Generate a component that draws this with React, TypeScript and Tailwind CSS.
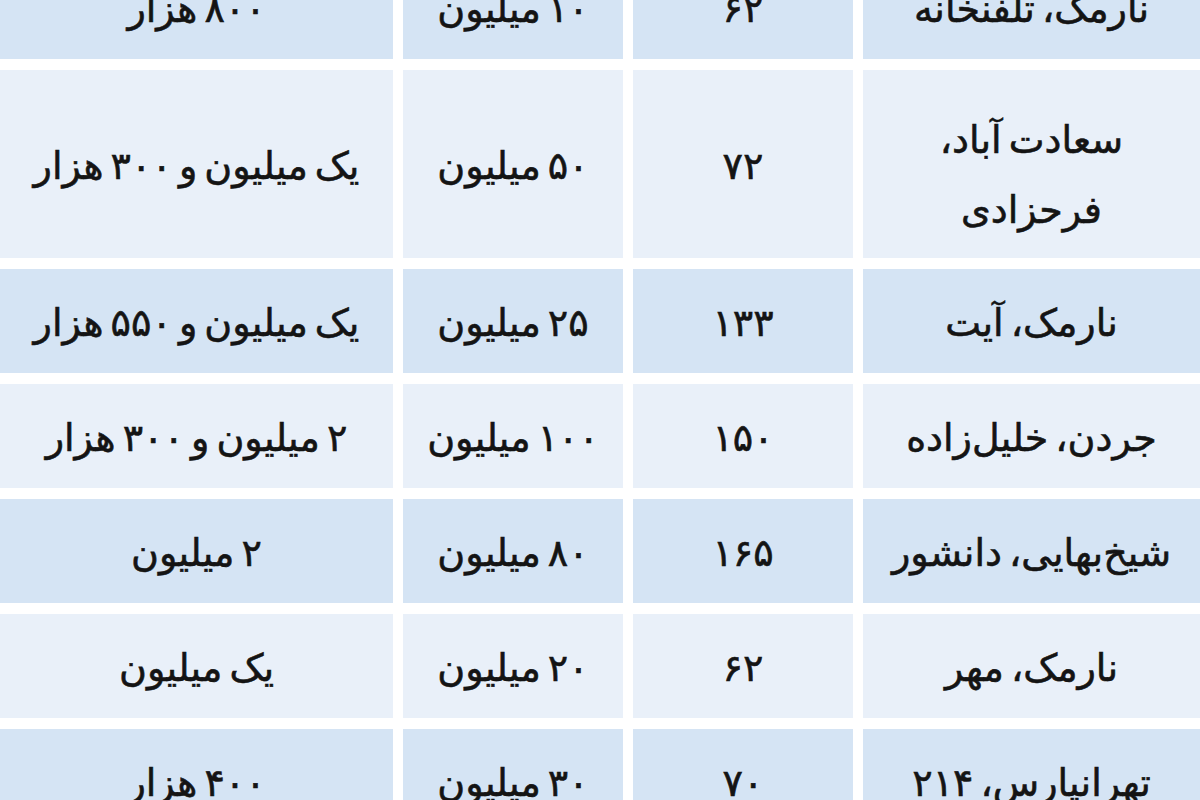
const rows: { price: string; deposit: string; area: string; place: string[] }[] = [
  { price: "۸۰۰ هزار", deposit: "۱۰ میلیون", area: "۶۲", place: ["نارمک، تلفنخانه"] },
  { price: "یک میلیون و ۳۰۰ هزار", deposit: "۵۰ میلیون", area: "۷۲", place: ["سعادت آباد،", "فرحزادی"] },
  { price: "یک میلیون و ۵۵۰ هزار", deposit: "۲۵ میلیون", area: "۱۳۳", place: ["نارمک، آیت"] },
  { price: "۲ میلیون و ۳۰۰ هزار", deposit: "۱۰۰ میلیون", area: "۱۵۰", place: ["جردن، خلیل‌زاده"] },
  { price: "۲ میلیون", deposit: "۸۰ میلیون", area: "۱۶۵", place: ["شیخ‌بهایی، دانشور"] },
  { price: "یک میلیون", deposit: "۲۰ میلیون", area: "۶۲", place: ["نارمک، مهر"] },
  { price: "۴۰۰ هزار", deposit: "۳۰ میلیون", area: "۷۰", place: ["تهرانپارس، ۲۱۴"] },
];

function Cell({ dark, tall, children }: { dark: boolean; tall: boolean; children: React.ReactNode }) {
  return (
    <div
      className={
        "flex flex-col items-center justify-center text-center whitespace-nowrap " +
        (tall ? "h-[188px] " : "h-[104px] ") +
        (dark ? "bg-[#d5e4f4]" : "bg-[#e9f0f9]")
      }
    >
      {children}
    </div>
  );
}

export default function App() {
  return (
    <div className="w-[1200px] h-[800px] overflow-hidden bg-white">
      <div
        dir="rtl"
        className="-mt-[45px] grid grid-cols-[337px_220px_220px_393px] gap-x-[10px] gap-y-[11px] text-[38px] text-[#141414] [word-spacing:-5px] [-webkit-text-stroke:0.6px_#141414] font-['DejaVu_Sans',sans-serif]"
      >
        {rows.map((r, i) => {
          const dark = i % 2 === 0;
          const tall = r.place.length > 1;
          return [
            <Cell key={i + "p"} dark={dark} tall={tall}>
              <div className={tall ? "pt-[22px] leading-[70px]" : "pt-[4px]"}>
                {r.place.map((l) => (
                  <div key={l}>{l}</div>
                ))}
              </div>
            </Cell>,
            <Cell key={i + "a"} dark={dark} tall={tall}>
              <div className="pt-[4px]">{r.area}</div>
            </Cell>,
            <Cell key={i + "d"} dark={dark} tall={tall}>
              <div className="pt-[4px]">{r.deposit}</div>
            </Cell>,
            <Cell key={i + "r"} dark={dark} tall={tall}>
              <div className="pt-[4px]">{r.price}</div>
            </Cell>,
          ];
        })}
      </div>
    </div>
  );
}
